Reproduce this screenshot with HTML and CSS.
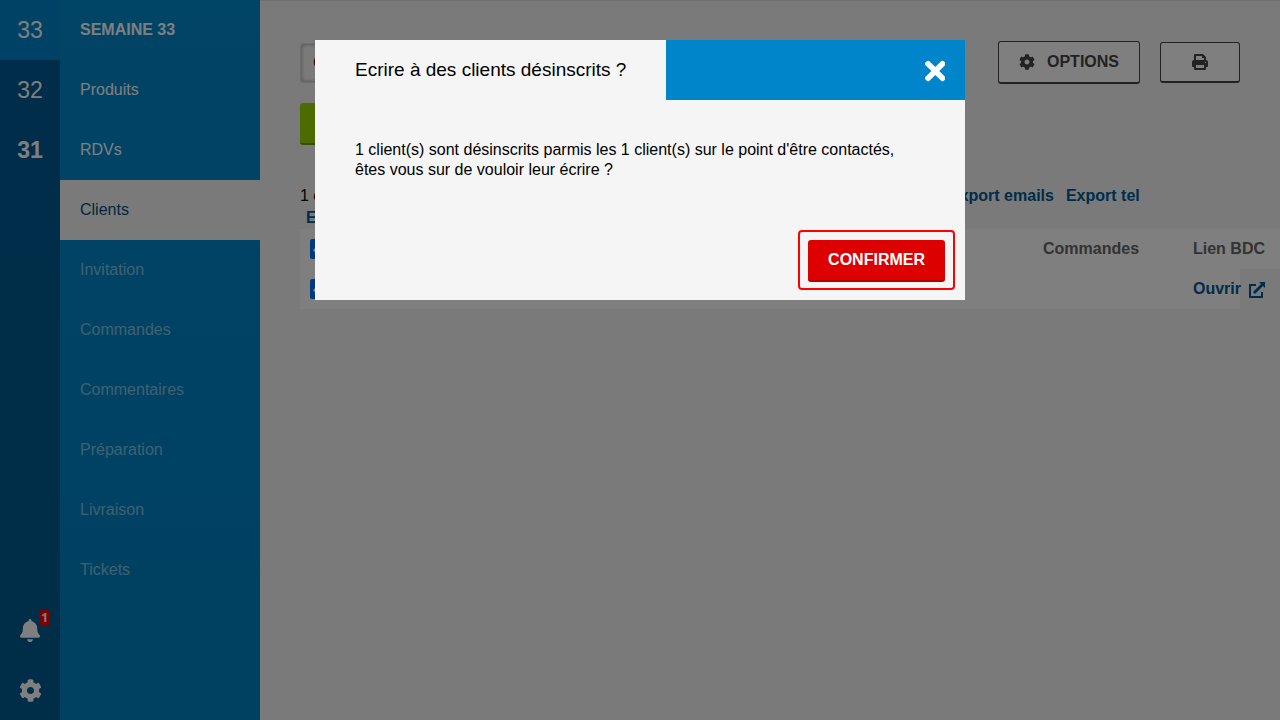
FILE: index.html
```html
<!DOCTYPE html>
<html lang="fr">
<head>
    <meta charset="utf-8">
    <title>Clients - Semaine 33</title>
    <link rel="stylesheet" href="styles.css">
</head>
<body>
    <div class="app">
        <nav class="weeks">
            <a href="#" class="week active">33</a>
            <a href="#" class="week">32</a>
            <a href="#" class="week current">31</a>
            <div class="weeks-bottom">
                <a href="#" class="rail-link" aria-label="Notifications">
                    <svg class="icon-rail" viewBox="0 0 448 512"><path d="M224 512c35.32 0 63.97-28.65 63.97-64H160.03c0 35.35 28.65 64 63.97 64zm215.39-149.71c-19.32-20.76-55.47-51.99-55.47-154.29 0-77.7-54.48-139.9-127.94-155.16V32c0-17.67-14.32-32-31.98-32s-31.98 14.33-31.98 32v20.84C118.56 68.1 64.08 130.3 64.08 208c0 102.3-36.15 133.53-55.47 154.29-6 6.45-8.66 14.16-8.61 21.71.11 16.4 12.98 32 32.1 32h383.8c19.12 0 32-15.6 32.1-32 .05-7.55-2.61-15.27-8.61-21.71z"/></svg>
                    <span class="badge">1</span>
                </a>
                <a href="#" class="rail-link" aria-label="Réglages">
                    <svg class="icon-rail" viewBox="0 0 512 512"><path d="M487.4 315.7l-42.6-24.6c4.3-23.2 4.3-47 0-70.2l42.6-24.6c4.9-2.8 7.1-8.6 5.5-14-11.1-35.6-30-67.8-54.7-94.6-3.8-4.1-10-5.1-14.8-2.3L380.8 110c-17.9-15.4-38.5-27.3-60.8-35.1V25.8c0-5.6-3.9-10.5-9.4-11.7-36.7-8.2-74.3-7.8-109.2 0-5.5 1.2-9.4 6.1-9.4 11.7V75c-22.2 7.9-42.8 19.8-60.8 35.1L88.7 85.5c-4.9-2.8-11-1.9-14.8 2.3-24.7 26.7-43.6 58.9-54.7 94.6-1.7 5.4.6 11.2 5.5 14L67.3 221c-4.3 23.2-4.3 47 0 70.2l-42.6 24.6c-4.9 2.8-7.1 8.6-5.5 14 11.1 35.6 30 67.8 54.7 94.6 3.8 4.1 10 5.1 14.8 2.3l42.6-24.6c17.9 15.4 38.5 27.3 60.8 35.1v49.2c0 5.6 3.9 10.5 9.4 11.7 36.7 8.2 74.3 7.8 109.2 0 5.5-1.2 9.4-6.1 9.4-11.7v-49.2c22.2-7.9 42.8-19.8 60.8-35.1l42.6 24.6c4.9 2.8 11 1.9 14.8-2.3 24.7-26.7 43.6-58.9 54.7-94.6 1.5-5.5-.7-11.3-5.6-14.1zM256 336c-44.1 0-80-35.9-80-80s35.9-80 80-80 80 35.9 80 80-35.9 80-80 80z"/></svg>
                </a>
            </div>
        </nav>

        <nav class="menu">
            <a href="#" class="menu-item title">SEMAINE 33</a>
            <a href="#" class="menu-item">Produits</a>
            <a href="#" class="menu-item">RDVs</a>
            <a href="#" class="menu-item active">Clients</a>
            <a href="#" class="menu-item disabled">Invitation</a>
            <a href="#" class="menu-item disabled">Commandes</a>
            <a href="#" class="menu-item disabled">Commentaires</a>
            <a href="#" class="menu-item disabled">Préparation</a>
            <a href="#" class="menu-item disabled">Livraison</a>
            <a href="#" class="menu-item disabled">Tickets</a>
        </nav>

        <main class="content">
            <div class="toolbar">
                <input type="search" class="search" placeholder="Chercher" aria-label="Chercher">
                <div class="toolbar-buttons">
                    <button type="button" class="btn btn-outline">
                        <svg class="icon" viewBox="0 0 512 512"><path d="M487.4 315.7l-42.6-24.6c4.3-23.2 4.3-47 0-70.2l42.6-24.6c4.9-2.8 7.1-8.6 5.5-14-11.1-35.6-30-67.8-54.7-94.6-3.8-4.1-10-5.1-14.8-2.3L380.8 110c-17.9-15.4-38.5-27.3-60.8-35.1V25.8c0-5.6-3.9-10.5-9.4-11.7-36.7-8.2-74.3-7.8-109.2 0-5.5 1.2-9.4 6.1-9.4 11.7V75c-22.2 7.9-42.8 19.8-60.8 35.1L88.7 85.5c-4.9-2.8-11-1.9-14.8 2.3-24.7 26.7-43.6 58.9-54.7 94.6-1.7 5.4.6 11.2 5.5 14L67.3 221c-4.3 23.2-4.3 47 0 70.2l-42.6 24.6c-4.9 2.8-7.1 8.6-5.5 14 11.1 35.6 30 67.8 54.7 94.6 3.8 4.1 10 5.1 14.8 2.3l42.6-24.6c17.9 15.4 38.5 27.3 60.8 35.1v49.2c0 5.6 3.9 10.5 9.4 11.7 36.7 8.2 74.3 7.8 109.2 0 5.5-1.2 9.4-6.1 9.4-11.7v-49.2c22.2-7.9 42.8-19.8 60.8-35.1l42.6 24.6c4.9 2.8 11 1.9 14.8-2.3 24.7-26.7 43.6-58.9 54.7-94.6 1.5-5.5-.7-11.3-5.6-14.1zM256 336c-44.1 0-80-35.9-80-80s35.9-80 80-80 80 35.9 80 80-35.9 80-80 80z"/></svg>
                        OPTIONS
                    </button>
                    <button type="button" class="btn btn-outline btn-print" aria-label="Imprimer">
                        <svg class="icon" viewBox="0 0 16 16"><path fill-rule="evenodd" d="M3 0h8l3 3v3a2 2 0 0 1 2 2v4a1 1 0 0 1-1 1h-1v2a1 1 0 0 1-1 1H3a1 1 0 0 1-1-1v-2H1a1 1 0 0 1-1-1V8a2 2 0 0 1 2-2V1a1 1 0 0 1 1-1zM4 2v4h8V4h-2V2zM4 11v3h8v-3zM13 8v1h1V8z"/></svg>
                    </button>
                </div>
            </div>

            <button type="button" class="btn btn-green">ECRIRE</button>

            <div class="summary">
                <span class="count">1 client(s)</span>
                <a href="#">Export emails</a>
                <a href="#">Export tel</a>
                <a href="#">Export complet</a>
            </div>

            <div class="table-box">
                <table class="clients">
                    <thead>
                        <tr>
                            <th class="col-check"><input type="checkbox" checked aria-label="Tous"></th>
                            <th>Client</th>
                            <th class="col">Commandes</th>
                            <th class="col">Lien BDC</th>
                        </tr>
                    </thead>
                    <tbody>
                        <tr>
                            <td class="col-check"><input type="checkbox" checked aria-label="Client"></td>
                            <td></td>
                            <td></td>
                            <td>
                                <a href="#" class="open-link">Ouvrir
                                    <svg class="icon" viewBox="0 0 16 17"><path d="M7 4H1v12h12v-5" fill="none" stroke="currentColor" stroke-width="2"/><path d="M10 1h6v6l-2-2-8 8-2-2 8-8z"/></svg>
                                </a>
                            </td>
                        </tr>
                    </tbody>
                </table>
            </div>
        </main>
    </div>

    <div class="overlay">
        <div class="modal" role="dialog" aria-modal="true" aria-labelledby="modalTitle">
            <div class="modal-header">
                <h2 id="modalTitle">Ecrire à des clients désinscrits ?</h2>
                <button type="button" class="close" aria-label="Fermer">
                    <svg viewBox="0 0 352 512"><path d="M242.72 256l100.07-100.07c12.28-12.28 12.28-32.19 0-44.48l-22.24-22.24c-12.28-12.28-32.19-12.28-44.48 0L176 189.28 75.93 89.21c-12.28-12.28-32.19-12.28-44.48 0L9.21 111.45c-12.28 12.28-12.28 32.19 0 44.48L109.28 256 9.21 356.07c-12.28 12.28-12.28 32.19 0 44.48l22.24 22.24c12.28 12.28 32.2 12.28 44.48 0L176 322.72l100.07 100.07c12.28 12.28 32.2 12.28 44.48 0l22.24-22.24c12.28-12.28 12.28-32.19 0-44.48L242.72 256z"/></svg>
                </button>
            </div>
            <p class="modal-text">1 client(s) sont désinscrits parmis les 1 client(s) sur le point d'être contactés, êtes vous sur de vouloir leur écrire ?</p>
            <div class="modal-footer">
                <div class="highlight">
                    <button type="button" class="btn btn-red">CONFIRMER</button>
                </div>
            </div>
        </div>
    </div>
</body>
</html>
```

FILE: styles.css
```css
* {
    box-sizing: border-box;
}
body {
    margin: 0;
    font-family: "Liberation Sans", Arial, sans-serif;
    font-size: 16px;
    line-height: 20px;
    color: #000;
    background-color: #f5f5f5;
    overflow: hidden;
}
a {
    color: #005a94;
    text-decoration: none;
}
svg {
    fill: currentColor;
}
.app {
    display: flex;
    height: 100vh;
}

/* Sidebar */
.weeks {
    display: flex;
    flex-direction: column;
    width: 60px;
    background: linear-gradient(#005a94, #005a8e);
}
.week {
    height: 60px;
    line-height: 60px;
    font-size: 23px;
    text-align: center;
    color: #fff;
}
.week.active {
    background-color: #0085ca;
}
.week.current {
    font-weight: bold;
}
.weeks-bottom {
    margin-top: auto;
}
.rail-link {
    position: relative;
    display: flex;
    align-items: center;
    justify-content: center;
    height: 60px;
    color: #fff;
}
.icon-rail {
    height: 23px;
}
.badge {
    position: absolute;
    top: 10px;
    right: 10px;
    padding: 0 2px;
    border-radius: 3px;
    background-color: #f00;
    font-family: "Noto Sans", sans-serif;
    font-size: 12px;
    font-weight: bold;
    line-height: 16px;
}
.menu {
    width: 200px;
    background: linear-gradient(#0088cc, #0082c4);
}
.menu-item {
    display: block;
    height: 60px;
    padding: 0 20px;
    line-height: 60px;
    color: #fff;
}
.menu-item.title {
    font-weight: bold;
}
.menu-item.active {
    background-color: #f5f5f5;
    color: #00507a;
}
.menu-item.disabled {
    color: rgba(255, 255, 255, 0.5);
}

/* Content */
.content {
    flex: 1;
    min-width: 0;
    padding: 40px;
    border-top: 1px solid #ddd;
    overflow: hidden;
}
.toolbar {
    display: flex;
    align-items: center;
    justify-content: space-between;
    gap: 20px;
    margin-bottom: 19px;
}
.toolbar-buttons {
    display: flex;
    align-items: center;
    gap: 20px;
}
.search {
    width: 300px;
    height: 40px;
    padding: 0 12px;
    border: 1px solid #ddd;
    border-radius: 3px;
    background-color: #f5f5f5;
    box-shadow: inset 0 0 4px rgba(0, 0, 0, 0.4);
    font-family: inherit;
    font-size: 16px;
}
.search::placeholder {
    color: #222;
}
.btn {
    display: inline-flex;
    align-items: center;
    justify-content: center;
    height: 42px;
    padding: 0 20px;
    border: 0;
    border-radius: 3px;
    font-family: inherit;
    font-size: 16px;
    font-weight: bold;
    cursor: pointer;
}
.btn-outline {
    gap: 12px;
    height: 43px;
    border: 1px solid #444;
    border-bottom-width: 2px;
    background-color: #fff;
    color: #444;
}
.btn-print {
    width: 80px;
    height: 41px;
}
.btn-green {
    width: 200px;
    border-bottom: 2px solid #6da000;
    background-color: #98d900;
    color: #fff;
}
.icon {
    width: 16px;
    height: 16px;
}
.summary {
    display: flex;
    flex-wrap: wrap;
    margin-top: 40px;
    line-height: 22px;
}
.summary a {
    margin: 0 6px;
    font-weight: bold;
}
.count {
    flex: 0 0 643px;
}
.table-box {
    background-color: #fff;
}
.clients {
    width: 1033px;
    border-collapse: collapse;
    table-layout: fixed;
}
.clients th,
.clients td {
    height: 40px;
    padding: 0 10px;
    text-align: left;
}
.clients th {
    background-color: #fff;
    color: #666;
}
.clients .col-check {
    width: 40px;
}
.clients .col {
    width: 150px;
}
.clients input {
    display: block;
    width: 20px;
    height: 20px;
    margin: 0;
}
.open-link {
    display: flex;
    align-items: center;
    gap: 8px;
    font-weight: bold;
}
.open-link .icon {
    height: 17px;
}

/* Modal */
.overlay {
    position: fixed;
    inset: 0;
    padding: 40px 20px;
    background-color: rgba(0, 0, 0, 0.5);
}
.modal {
    max-width: 650px;
    margin: 0 auto;
    background-color: #f5f5f5;
}
.modal-header {
    display: flex;
    justify-content: space-between;
    background-color: #0085ca;
}
.modal-header h2 {
    margin: 0;
    padding: 0 40px;
    background-color: #f5f5f5;
    font-size: 19px;
    font-weight: normal;
    line-height: 60px;
}
.close {
    display: flex;
    align-items: center;
    justify-content: center;
    width: 60px;
    height: 60px;
    padding: 2px 0 0;
    border: 0;
    background: none;
    color: #fff;
    cursor: pointer;
}
.close svg {
    height: 30px;
}
.modal-text {
    margin: 0;
    padding: 40px 40px 50px;
}
.modal-footer {
    display: flex;
    justify-content: flex-end;
    padding: 0 10px 10px;
}
.highlight {
    padding: 8px 8px 6px;
    border: 2px solid #f00;
    border-radius: 4px;
}
.btn-red {
    display: flex;
    border-bottom: 2px solid #b00000;
    background-color: #d00;
    color: #fff;
}
```
